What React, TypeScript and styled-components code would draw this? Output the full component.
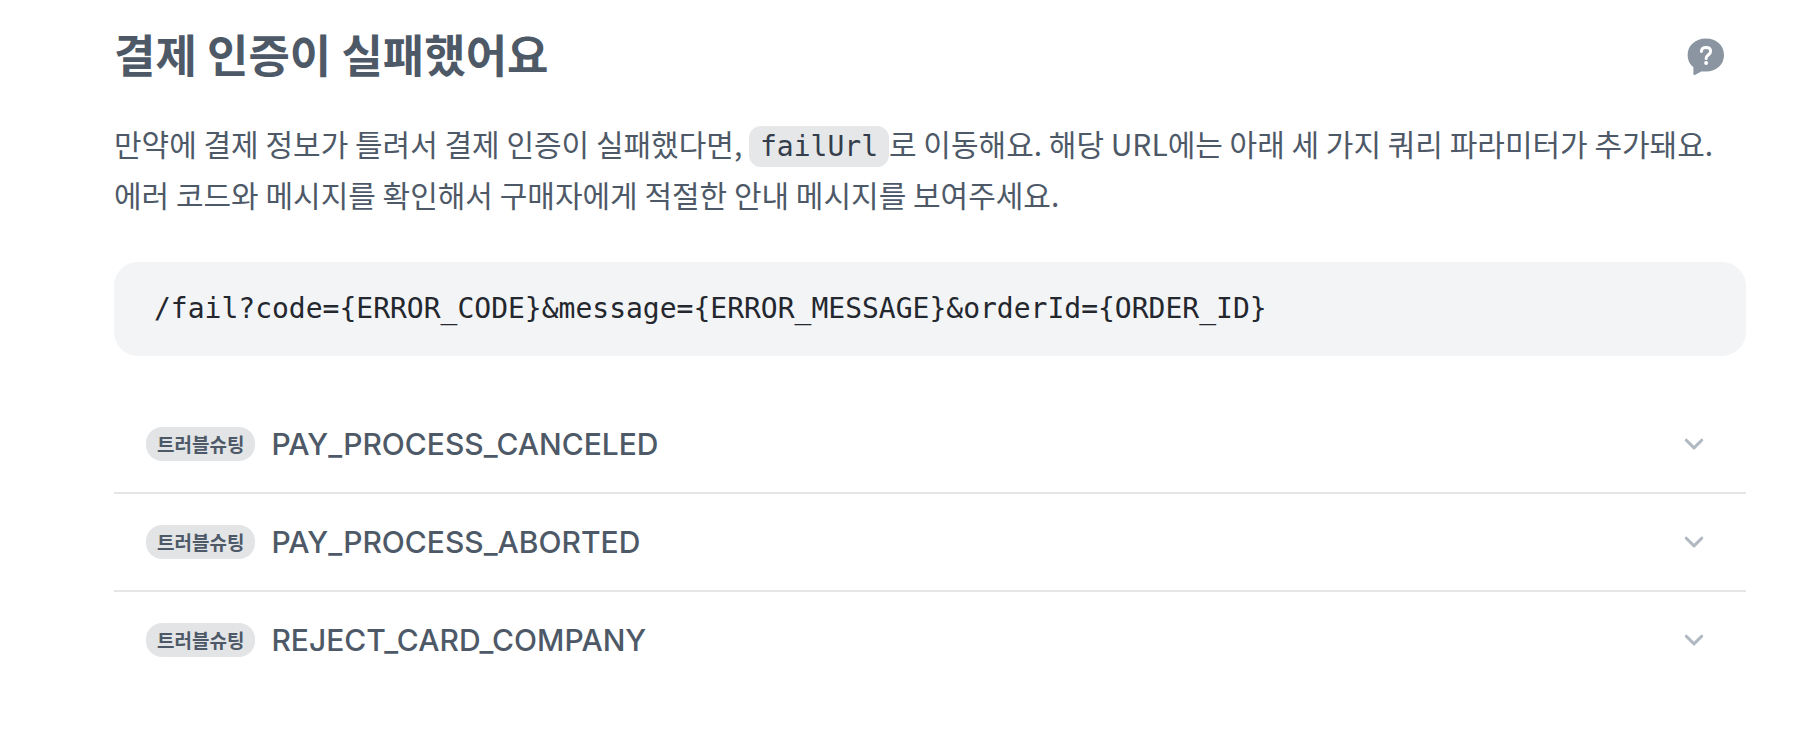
import React, { useState } from "react";
import styled, { createGlobalStyle } from "styled-components";

const GlobalStyle = createGlobalStyle`
  *, *::before, *::after { box-sizing: border-box; }
  body {
    margin: 0;
    background: #fff;
    color: #4e5968;
    font-family: "Noto Sans CJK KR", sans-serif;
  }
`;

const Page = styled.main`
  padding: 24px 52px 64px 114px;
`;

const Header = styled.header`
  display: flex;
  align-items: flex-end;
  justify-content: space-between;
  padding-right: 13px;
`;

const Title = styled.h2`
  margin: 0;
  font-size: 45px;
  font-weight: 700;
  line-height: 60px;
`;

const HelpButton = styled.button`
  display: flex;
  padding: 8px;
  border: 0;
  background: none;
  color: #8b95a1;
  cursor: pointer;
`;

const Description = styled.p`
  margin: 34px 0 0;
  font-size: 30px;
  line-height: 51px;
`;

const InlineCode = styled.code`
  padding: 4px 11px;
  border-radius: 12px;
  background: #e5e7e9;
  color: #333d4b;
  font-family: "DejaVu Sans Mono", monospace;
  font-size: 28px;
  line-height: 32px;
`;

const CodeBlock = styled.pre`
  margin: 42px 0 0;
  padding: 24px 40px;
  border-radius: 24px;
  background: #f2f4f6;
  color: #24272e;
  font-family: "DejaVu Sans Mono", monospace;
  font-size: 28px;
  line-height: 46px;
  overflow-x: auto;

  code {
    font: inherit;
  }
`;

const IssueList = styled.ul`
  margin: 40px 0 0;
  padding: 0;
  list-style: none;
`;

const IssueItem = styled.li`
  & + & {
    border-top: 2px solid #e5e5e6;
  }
`;

const IssueButton = styled.button`
  display: flex;
  align-items: center;
  gap: 16px;
  width: 100%;
  height: 96px;
  padding: 0 40px 0 32px;
  border: 0;
  background: none;
  color: #4e5968;
  text-align: left;
  cursor: pointer;
`;

const Badge = styled.span`
  padding: 0 11px;
  border-radius: 16px;
  background: #e2e4e6;
  font-family: "Noto Sans CJK KR", sans-serif;
  font-size: 19px;
  font-weight: 700;
  line-height: 34px;
`;

const IssueName = styled.span`
  flex: 1;
  font-family: Inter, sans-serif;
  font-size: 30px;
  font-weight: 500;
  line-height: 40px;
`;

const Chevron = styled.svg<{ $open: boolean }>`
  transform: ${(p) => (p.$open ? "rotate(180deg)" : "none")};
`;

const issues = [
  "PAY_PROCESS_CANCELED",
  "PAY_PROCESS_ABORTED",
  "REJECT_CARD_COMPANY",
];

function HelpIcon() {
  return (
    <svg width="38" height="38" viewBox="0 0 38 38" aria-hidden="true">
      <path
        fill="currentColor"
        d="M19 0.5C29.5 0.5 37 7.4 37 17C37 26.6 29.5 33.5 19 33.5H14.2L8.3 36.7C7.3 37.2 6.4 36.8 6.4 35.7V29.3C2.6 26.3 0.6 22 0.6 17C0.6 7.4 8.5 0.5 19 0.5Z"
      />
      <path
        fill="none"
        stroke="#fff"
        strokeWidth="3"
        strokeLinecap="round"
        d="M14.4 13.4C14.6 10.9 16.4 9.6 19 9.6C21.7 9.6 23.6 11.1 23.6 13.5C23.6 16.7 19.1 16.9 19.1 20.5"
      />
      <circle cx="19.1" cy="24.9" r="2" fill="#fff" />
    </svg>
  );
}

export default function App() {
  const [openIssue, setOpenIssue] = useState<string | null>(null);

  return (
    <>
      <GlobalStyle />
      <Page>
        <Header>
          <Title>결제 인증이 실패했어요</Title>
          <HelpButton type="button" aria-label="도움말">
            <HelpIcon />
          </HelpButton>
        </Header>
        <Description>
          만약에 결제 정보가 틀려서 결제 인증이 실패했다면,{" "}
          <InlineCode>failUrl</InlineCode>로 이동해요. 해당 URL에는 아래 세 가지
          쿼리 파라미터가 추가돼요. 에러 코드와 메시지를 확인해서 구매자에게
          적절한 안내 메시지를 보여주세요.
        </Description>
        <CodeBlock>
          <code>
            {"/fail?code={ERROR_CODE}&message={ERROR_MESSAGE}&orderId={ORDER_ID}"}
          </code>
        </CodeBlock>
        <IssueList>
          {issues.map((name) => (
            <IssueItem key={name}>
              <IssueButton
                type="button"
                aria-expanded={openIssue === name}
                onClick={() => setOpenIssue(openIssue === name ? null : name)}
              >
                <Badge>트러블슈팅</Badge>
                <IssueName>{name}</IssueName>
                <Chevron
                  $open={openIssue === name}
                  width="24"
                  height="24"
                  viewBox="0 0 24 24"
                  fill="none"
                  stroke="#b0b8c1"
                  strokeWidth="3"
                  strokeLinecap="round"
                  strokeLinejoin="round"
                  aria-hidden="true"
                >
                  <path d="M4.3 8.2L12 15.9L19.7 8.2" />
                </Chevron>
              </IssueButton>
            </IssueItem>
          ))}
        </IssueList>
      </Page>
    </>
  );
}
